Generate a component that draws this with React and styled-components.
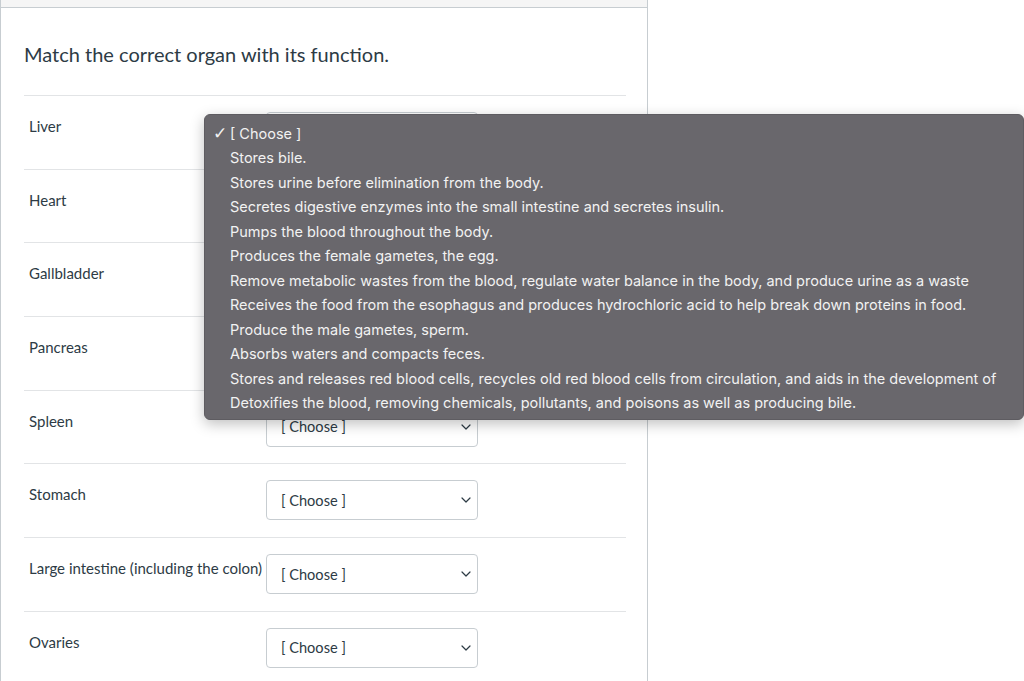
import React from "react";
import styled, { createGlobalStyle } from "styled-components";

const GlobalStyle = createGlobalStyle`
  html, body {
    margin: 0;
    padding: 0;
    background: #ffffff;
  }
  body {
    font-family: Lato, "Open Sans", sans-serif;
    color: #2d3b45;
  }
`;

const Page = styled.div`
  position: relative;
  width: 1024px;
  height: 681px;
  overflow: hidden;
`;

const Panel = styled.div`
  width: 648px;
  box-sizing: border-box;
  border-left: 1px solid #c7cdd1;
  border-right: 1px solid #c7cdd1;
  min-height: 681px;
`;

const TopStrip = styled.div`
  height: 7px;
  background: #f5f5f5;
  border-bottom: 1px solid #c7cdd1;
`;

const Body = styled.div`
  padding: 0 21px 0 23px;
`;

const Title = styled.div`
  font-size: 20px;
  line-height: 24px;
  padding: 34px 0 29px;
  color: #2d3b45;
`;

const Row = styled.div`
  display: flex;
  align-items: flex-start;
  height: 73.7px;
  box-sizing: border-box;
  border-top: 1px solid #e2e4e6;
  padding-top: 16px;
`;

const Label = styled.div`
  width: 242px;
  padding: 5px 0 0 5px;
  box-sizing: border-box;
  font-size: 15px;
  line-height: 18px;
  white-space: nowrap;
  color: #2d3b45;
`;

const Select = styled.div`
  width: 212px;
  height: 40px;
  box-sizing: border-box;
  border: 1px solid #c7cdd1;
  border-radius: 4px;
  background: #fff;
  display: flex;
  align-items: center;
  justify-content: space-between;
  padding: 0 6px 0 14px;
  font-size: 14.6px;
  color: #2d3b45;
`;

const Chevron = () => (
  <svg width="10" height="6" viewBox="0 0 10 6">
    <polyline
      points="1,1 5,5 9,1"
      fill="none"
      stroke="#2d3b45"
      strokeWidth="1.2"
      strokeLinecap="round"
      strokeLinejoin="round"
    />
  </svg>
);

const Menu = styled.div`
  position: absolute;
  left: 204px;
  top: 114px;
  width: 820px;
  height: 306px;
  box-sizing: border-box;
  background: #69676c;
  border: 1px solid #5e5c61;
  border-radius: 6px;
  box-shadow: 0 4px 14px rgba(0, 0, 0, 0.25);
  padding: 6px 0 0 0;
  font-family: Inter, "Liberation Sans", sans-serif;
  font-size: 14.5px;
  color: #f2f2f2;
`;

const MenuItem = styled.div`
  display: flex;
  align-items: center;
  height: 24.5px;
  white-space: nowrap;
`;

const Check = styled.span`
  width: 25px;
  padding-left: 8px;
  box-sizing: border-box;
  font-size: 17px;
  line-height: 1;
  font-family: "DejaVu Sans", sans-serif;
`;

const organs = [
  "Liver",
  "Heart",
  "Gallbladder",
  "Pancreas",
  "Spleen",
  "Stomach",
  "Large intestine (including the colon)",
  "Ovaries",
];

const options = [
  "[ Choose ]",
  "Stores bile.",
  "Stores urine before elimination from the body.",
  "Secretes digestive enzymes into the small intestine and secretes insulin.",
  "Pumps the blood throughout the body.",
  "Produces the female gametes, the egg.",
  "Remove metabolic wastes from the blood, regulate water balance in the body, and produce urine as a waste",
  "Receives the food from the esophagus and produces hydrochloric acid to help break down proteins in food.",
  "Produce the male gametes, sperm.",
  "Absorbs waters and compacts feces.",
  "Stores and releases red blood cells, recycles old red blood cells from circulation, and aids in the development of",
  "Detoxifies the blood, removing chemicals, pollutants, and poisons as well as producing bile.",
];

export default function App() {
  return (
    <Page>
      <GlobalStyle />
      <Panel>
        <TopStrip />
        <Body>
          <Title>Match the correct organ with its function.</Title>
          {organs.map((o) => (
            <Row key={o}>
              <Label>{o}</Label>
              <Select>
                <span>[ Choose ]</span>
                <Chevron />
              </Select>
            </Row>
          ))}
        </Body>
      </Panel>
      <Menu>
        {options.map((t, i) => (
          <MenuItem key={t}>
            <Check>{i === 0 ? "✓" : ""}</Check>
            <span>{t}</span>
          </MenuItem>
        ))}
      </Menu>
    </Page>
  );
}
